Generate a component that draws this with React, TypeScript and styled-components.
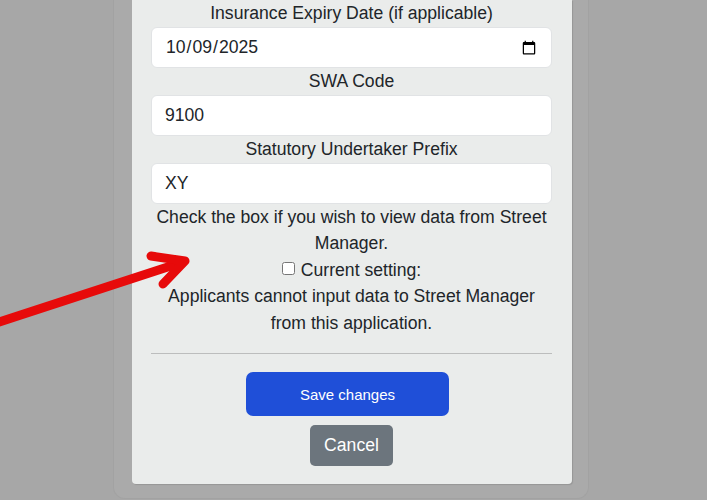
import React from 'react'
import styled, { createGlobalStyle } from 'styled-components'

const GlobalStyle = createGlobalStyle`
  html, body {
    margin: 0;
    padding: 0;
    background: #a7a7a7;
    font-family: 'Liberation Sans', Arial, sans-serif;
    overflow: hidden;
  }
`

const Page = styled.div`
  position: relative;
  height: 500px;
  padding-left: 113px;
`

const Dialog = styled.div`
  width: 476px;
  box-sizing: border-box;
  padding: 0 17px 14px 19px;
  background: #aaaaaa;
  border: 1px solid #a2a2a2;
  border-top: none;
  border-radius: 0 0 12px 12px;
`

const Card = styled.div`
  width: 440px;
  box-sizing: border-box;
  padding: 0 20px 18px 19px;
  margin-left: -1px;
  background: #eaeceb;
  border-radius: 0 0 4px 4px;
  box-shadow: 1px 1px 1px rgba(0, 0, 0, 0.12);
  color: #212529;
`

const Field = styled.div`
  display: flex;
  flex-direction: column;
`

const Label = styled.label`
  display: block;
  text-align: center;
  font-size: 17.6px;
  line-height: 27px;
`

const Input = styled.input`
  box-sizing: border-box;
  width: 100%;
  height: 41px;
  padding: 0 12px 0 13px;
  font-family: 'Liberation Sans', Arial, sans-serif;
  font-size: 17.6px;
  color: #212529;
  background: #ffffff;
  border: 1px solid #e1e3e5;
  border-radius: 6px;
  outline: none;

  &::-webkit-calendar-picker-indicator {
    width: 16px;
    height: 16px;
  }
`

const Notice = styled.p`
  margin: 0;
  text-align: center;
  font-size: 17.6px;
  line-height: 26.4px;
`

const CheckRow = styled.label`
  display: flex;
  align-items: center;
  justify-content: center;
  font-size: 17.6px;
  line-height: 26.4px;
`

const Box = styled.input`
  margin: 0 6px 3px 0;
  width: 13px;
  height: 13px;
`

const Divider = styled.hr`
  margin: 17px 0 18px;
  border: none;
  border-top: 1px solid #bcbdbd;
`

const Actions = styled.div`
  display: flex;
  flex-direction: column;
  align-items: center;
  gap: 9px;
`

const Button = styled.button<{ $variant: 'primary' | 'secondary' }>`
  font-family: 'Liberation Sans', Arial, sans-serif;
  color: #ffffff;
  border: none;
  cursor: pointer;
  background: ${({ $variant }) => ($variant === 'primary' ? '#1f4fd8' : '#6c757d')};
  width: ${({ $variant }) => ($variant === 'primary' ? '203px' : '83px')};
  height: ${({ $variant }) => ($variant === 'primary' ? '44px' : '41px')};
  font-size: ${({ $variant }) => ($variant === 'primary' ? '15px' : '17.6px')};
  border-radius: ${({ $variant }) => ($variant === 'primary' ? '7px' : '5px')};
  margin-right: ${({ $variant }) => ($variant === 'primary' ? '8px' : '0')};
`

const Arrow = styled.svg`
  position: absolute;
  left: 0;
  top: 0;
  pointer-events: none;
`

const App = () => (
  <>
    <GlobalStyle />
    <Page>
      <Dialog>
        <Card>
          <Field>
            <Label>Insurance Expiry Date (if applicable)</Label>
            <Input type="date" defaultValue="2025-10-09" />
          </Field>
          <Field>
            <Label>SWA Code</Label>
            <Input type="text" defaultValue="9100" />
          </Field>
          <Field>
            <Label>Statutory Undertaker Prefix</Label>
            <Input type="text" defaultValue="XY" />
          </Field>
          <Notice>Check the box if you wish to view data from Street Manager.</Notice>
          <CheckRow>
            <Box type="checkbox" />
            Current setting:
          </CheckRow>
          <Notice>
            Applicants cannot input data to Street Manager
            <br />
            from this application.
          </Notice>
          <Divider />
          <Actions>
            <Button $variant="primary">Save changes</Button>
            <Button $variant="secondary">Cancel</Button>
          </Actions>
        </Card>
      </Dialog>
      <Arrow width="707" height="500" viewBox="0 0 707 500">
        <g stroke="#e70a0a" strokeWidth="9" strokeLinecap="round" strokeLinejoin="round" fill="none">
          <line x1="-10" y1="325" x2="183" y2="262" />
          <polyline points="151,256 185,261 163,284" />
        </g>
      </Arrow>
    </Page>
  </>
)

export default App
